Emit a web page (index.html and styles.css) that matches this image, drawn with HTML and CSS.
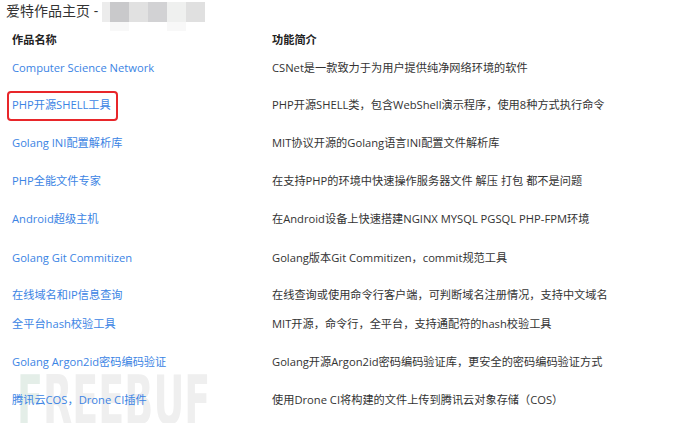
FILE: index.html
```html
<!DOCTYPE html>
<html>
<head>
    <title>爱特作品主页</title>
    <link rel="stylesheet" href="styles.css">
</head>
<body>
    <div class="title">
        <span>爱特作品主页 -</span>
        <div class="blur">
            <div class="blur-row">
                <i class="c1"></i><i class="c2"></i><i class="c3"></i><i class="c4"></i><i class="c5"></i><i class="c6"></i>
            </div>
            <div class="blur-row faint">
                <i class="c0"></i><i class="c7"></i><i class="c0"></i><i class="c0"></i><i class="c7"></i><i class="c0"></i>
            </div>
        </div>
    </div>

    <div class="works">
        <div class="row head">
            <div class="name">作品名称</div>
            <div class="desc">功能简介</div>
        </div>
        <div class="row first">
            <a class="name">Computer Science Network</a>
            <div class="desc">CSNet是一款致力于为用户提供纯净网络环境的软件</div>
        </div>
        <div class="row">
            <a class="name marked">PHP开源SHELL工具</a>
            <div class="desc">PHP开源SHELL类，包含WebShell演示程序，使用8种方式执行命令</div>
        </div>
        <div class="row">
            <a class="name">Golang INI配置解析库</a>
            <div class="desc">MIT协议开源的Golang语言INI配置文件解析库</div>
        </div>
        <div class="row">
            <a class="name">PHP全能文件专家</a>
            <div class="desc">在支持PHP的环境中快速操作服务器文件 解压 打包 都不是问题</div>
        </div>
        <div class="row wide">
            <a class="name">Android超级主机</a>
            <div class="desc">在Android设备上快速搭建NGINX MYSQL PGSQL PHP-FPM环境</div>
        </div>
        <div class="row first">
            <a class="name">Golang Git Commitizen</a>
            <div class="desc">Golang版本Git Commitizen，commit规范工具</div>
        </div>
        <div class="row tight">
            <a class="name">在线域名和IP信息查询</a>
            <div class="desc">在线查询或使用命令行客户端，可判断域名注册情况，支持中文域名</div>
        </div>
        <div class="row">
            <a class="name">全平台hash校验工具</a>
            <div class="desc">MIT开源，命令行，全平台，支持通配符的hash校验工具</div>
        </div>
        <div class="row">
            <a class="name">Golang Argon2id密码编码验证</a>
            <div class="desc">Golang开源Argon2id密码编码验证库，更安全的密码编码验证方式</div>
        </div>
        <div class="row">
            <a class="name">腾讯云COS，Drone CI插件</a>
            <div class="desc">使用Drone CI将构建的文件上传到腾讯云对象存储（COS）</div>
        </div>
    </div>

    <div class="watermark"><span class="wm-f">F</span>REEBUF</div>
</body>
</html>
```

FILE: styles.css
```css
body {
    margin: 0;
    background: #fff;
    color: #333;
    font-family: "Open Sans", "Noto Sans CJK SC", sans-serif;
    font-size: 11.2px;
    overflow: hidden;
    height: 423px;
    position: relative;
}
.title {
    display: flex;
    align-items: flex-start;
    height: 32px;
    padding-left: 6px;
    font-size: 14px;
    color: #333;
}
.title span {
    line-height: 20px;
    margin-top: 1px;
}
.blur {
    margin-left: 4px;
    margin-top: 2px;
}
.blur-row {
    display: flex;
    height: 20px;
}
.blur-row.faint {
    height: 9px;
}
.blur i {
    display: block;
    width: 19px;
}
.blur i.c1 { width: 8px; background: #ececec; }
.blur i.c2 { background: #c9c9cb; }
.blur i.c3 { background: #e1e1e1; }
.blur i.c4 { background: #d2d2d4; }
.blur i.c5 { background: #eff0ef; }
.blur i.c6 { background: #e0e0e0; }
.blur i.c0 { background: #fff; }
.blur i.c7 { background: #f8f8f8; }
.blur-row.faint i:first-child { width: 8px; }

.works {
    padding-left: 12px;
}
.row {
    display: grid;
    grid-template-columns: 260px 1fr;
    align-items: start;
    line-height: 16px;
    height: 38px;
}
.row.head {
    height: 28px;
    font-weight: bold;
    color: #222;
}
.row.first {
    height: 37px;
}
.row.wide {
    height: 39px;
}
.row.tight {
    height: 29px;
}
.name {
    color: #3b84e4;
    justify-self: start;
}
.head .name {
    color: #222;
}
.marked {
    outline: 2px solid #e8262a;
    border-radius: 2px;
    padding: 4px 5px 6px 3px;
    margin: -4px 0 0 -3px;
}
.watermark {
    position: absolute;
    left: 17px;
    top: 367px;
    font-family: "DejaVu Sans", sans-serif;
    font-weight: bold;
    font-size: 68px;
    line-height: 1;
    color: #efefef;
    transform: scaleX(0.56);
    transform-origin: left top;
    z-index: -1;
}
.wm-f {
    color: #e4eee8;
}
```
